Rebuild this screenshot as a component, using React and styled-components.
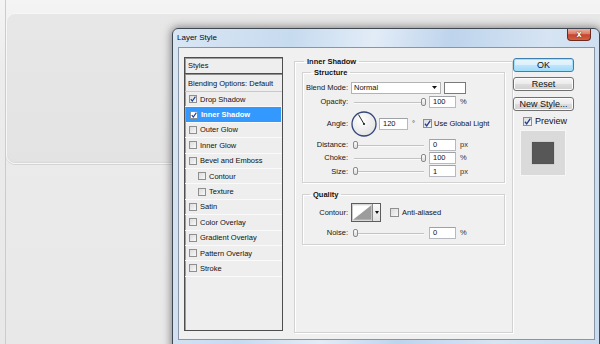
import React from 'react';
import styled, { createGlobalStyle } from 'styled-components';

const GlobalStyle = createGlobalStyle`
	html, body {
		margin: 0;
		padding: 0;
	}
	body {
		width: 600px;
		height: 344px;
		overflow: hidden;
		background: linear-gradient(#f4f4f4 0%, #ececec 20%, #e8e8e8 100%);
		font-family: "Liberation Sans", Arial, sans-serif;
		color: #111;
	}
`;

const Desktop = styled.div`
	position: relative;
	width: 600px;
	height: 344px;
	padding-left: 5px;
	box-sizing: border-box;
	overflow: hidden;
`;

const Guide = styled.div`
	height: 100%;
	border-left: 1px solid #8fe6ea;
	padding-top: 13px;
	box-sizing: border-box;
`;

const Card = styled.div`
	width: 640px;
	height: 151px;
	box-sizing: border-box;
	border: 1px solid #f7f7f7;
	border-radius: 9px;
	background: linear-gradient(#e7e7e7, #e3e3e3);
	box-shadow: 0 1px 0 #d4d4d4, inset 0 -1px 1px #d8d8d8;
`;

const Window = styled.div`
	position: absolute;
	left: 172px;
	top: 28px;
	width: 428px;
	height: 322px;
	box-sizing: border-box;
	border: 1px solid #3f4750;
	border-radius: 6px 6px 0 0;
	background: linear-gradient(100deg, #d9e6f4 0%, #c7dbef 25%, #e2ecf7 42%, #bed4ec 58%, #d6e4f3 78%, #c9dbee 100%);
	box-shadow: 0 0 9px 1px rgba(0, 0, 0, 0.45);
	display: flex;
	flex-direction: column;
`;

const TitleBar = styled.div`
	height: 18px;
	display: flex;
	justify-content: space-between;
	align-items: flex-start;
	flex: none;
`;

const Title = styled.span`
	font-size: 8px;
	line-height: 10px;
	padding: 4px 0 0 4px;
	color: #0b0b0b;
`;

const CloseButton = styled.div`
	width: 24px;
	height: 12px;
	margin-right: 8px;
	box-sizing: border-box;
	border: 1px solid #6b2a20;
	border-top: none;
	border-radius: 0 0 4px 4px;
	background: linear-gradient(#eeb1a3, #dc7a66 45%, #c7432d 52%, #d0623f);
	display: flex;
	align-items: center;
	justify-content: center;
	color: #fff;
	font: bold 8px "DejaVu Sans", sans-serif;
	text-shadow: 0 0 1px #5a1a10, 0 0 1px #5a1a10;
`;

const Client = styled.div`
	width: 417px;
	height: 293px;
	margin-left: 5px;
	box-sizing: border-box;
	border: 1px solid #8795a6;
	background: #f0f0f0;
	padding: 9px 0 0 5px;
	display: flex;
	align-items: flex-start;
	flex: none;
`;

const StylesPanel = styled.div`
	width: 99px;
	height: 274px;
	box-sizing: border-box;
	border: 1px solid #4e4e4e;
	box-shadow: inset 1px 1px 0 #9c9c9c;
	background: #eeeeee;
	margin-right: 11px;
	display: flex;
	flex-direction: column;
	flex: none;
	font-size: 7.5px;
	color: #111;
`;

const PanelHeader = styled.div`
	height: 16px;
	box-sizing: border-box;
	padding-left: 3px;
	display: flex;
	align-items: center;
	border-bottom: 1px solid #4e4e4e;
`;

const BlendHeader = styled.div`
	height: 18px;
	box-sizing: border-box;
	padding-left: 3px;
	display: flex;
	align-items: center;
	border-top: 1px solid #8e8e8e;
	border-bottom: 1px solid #c9c9c9;
`;

const StyleItem = styled.div`
	height: 15.4px;
	box-sizing: border-box;
	display: flex;
	align-items: center;
	gap: 3px;
	padding-left: ${p => (p.$sub ? 13 : 4)}px;
	border-bottom: 1px solid #fafafa;
	background: ${p => (p.$selected ? '#3399ff' : 'transparent')};
	color: ${p => (p.$selected ? '#fff' : '#111')};
	font-weight: ${p => (p.$selected ? 'bold' : 'normal')};
	margin-left: ${p => (p.$selected ? 1 : 0)}px;
	margin-right: ${p => (p.$selected ? 1 : 0)}px;
`;

const CheckBox = styled.span`
	width: ${p => p.$size}px;
	height: ${p => p.$size}px;
	box-sizing: border-box;
	border: 1px solid #8e8f8f;
	background: ${p => (p.$white ? '#fff' : 'linear-gradient(135deg, #dcdcdc, #f8f8f8)')};
	display: inline-flex;
	align-items: center;
	justify-content: center;
	flex: none;
`;

const Group = styled.fieldset`
	margin: ${p => p.$mt || 0}px 0 0 0;
	padding: 0 ${p => p.$pad}px;
	width: ${p => p.$w || '100%'};
	height: ${p => p.$h}px;
	box-sizing: border-box;
	min-width: 0;
	border: 1px solid #d2d2d2;
	box-shadow: inset 1px 1px 0 #ffffff, 1px 1px 0 #ffffff;
	flex: none;
`;

const Legend = styled.legend`
	font-weight: bold;
	font-size: 7.5px;
	line-height: 9px;
	padding: 0 3px;
	margin-left: ${p => p.$ml}px;
	color: #111;
`;

const Row = styled.div`
	display: flex;
	align-items: center;
	height: ${p => p.$h || 12}px;
	margin-top: ${p => p.$mt || 0}px;
	font-size: 7.5px;
`;

const Label = styled.span`
	width: 41px;
	margin-right: 3px;
	display: flex;
	justify-content: flex-end;
	white-space: nowrap;
	flex: none;
	color: #161616;
`;

const SliderTrack = styled.div`
	position: relative;
	width: 76px;
	height: 12px;
	margin-right: 2px;
	flex: none;
	&::before {
		content: '';
		position: absolute;
		left: 3px;
		right: 3px;
		top: 6px;
		height: 1px;
		background: #c3c3c3;
		box-shadow: 0 1px 0 #fafafa;
	}
`;

const Thumb = styled.span`
	position: absolute;
	top: 2px;
	${p => (p.$end ? 'right: 1px;' : 'left: 2px;')}
	width: 5px;
	height: 8px;
	box-sizing: border-box;
	border: 1px solid #8a8a8a;
	border-radius: 2px;
	background: linear-gradient(#fdfdfd, #dcdcdc);
`;

const Field = styled.span`
	width: ${p => p.$w || 27}px;
	height: 12px;
	box-sizing: border-box;
	border: 1px solid #b6b9bf;
	border-top-color: #9ea1a6;
	background: #fff;
	padding-left: 3px;
	display: flex;
	align-items: center;
	flex: none;
	margin-right: 4px;
`;

const Unit = styled.span`
	color: #333;
`;

const Select = styled.span`
	width: 90px;
	height: 12px;
	box-sizing: border-box;
	border: 1px solid #b3b3b3;
	background: #fff;
	padding: 0 3px 0 2px;
	display: flex;
	align-items: center;
	justify-content: space-between;
	margin-right: 3px;
	flex: none;
`;

const Swatch = styled.span`
	width: 22px;
	height: 12px;
	box-sizing: border-box;
	border: 1px solid #7a7a7a;
	background: #fff;
	flex: none;
`;

const Degree = styled.span`
	margin-right: 8px;
	color: #333;
`;

const CheckLabel = styled.span`
	margin-left: ${p => p.$gap || 2}px;
	font-size: ${p => p.$size || 7.5}px;
	color: #141414;
`;

const ContourPicker = styled.span`
	width: 30px;
	height: 19px;
	box-sizing: border-box;
	border: 1px solid #5d5d5d;
	display: flex;
	margin-right: 9px;
	flex: none;
	background: #fff;
`;

const ContourArrow = styled.span`
	width: 7px;
	border-left: 1px solid #8a8a8a;
	background: linear-gradient(#fafafa, #e2e2e2);
	display: flex;
	align-items: center;
	justify-content: center;
`;

const ButtonColumn = styled.div`
	width: 61px;
	padding-top: 1px;
	display: flex;
	flex-direction: column;
	align-items: center;
	flex: none;
`;

const Button = styled.div`
	width: 61px;
	height: 14px;
	margin-top: ${p => p.$mt || 0}px;
	box-sizing: border-box;
	border: 1px solid ${p => (p.$default ? '#3c7fb1' : '#707070')};
	border-radius: 3px;
	background: ${p =>
		p.$default
			? 'linear-gradient(#eaf6fd, #d9f0fc 50%, #bee6fd 50%, #a7d9f5)'
			: 'linear-gradient(#f6f6f6, #ebebeb 50%, #dddddd 50%, #cfcfcf)'};
	box-shadow: inset 0 0 0 1px ${p => (p.$default ? '#9fe0fb' : '#fcfcfc')};
	font-size: 9px;
	display: flex;
	align-items: center;
	justify-content: center;
	color: #111;
`;

const PreviewRow = styled.div`
	display: flex;
	align-items: center;
	height: 10px;
	margin-top: 5px;
	margin-left: 3px;
	align-self: flex-start;
	padding-left: 7px;
`;

const PreviewBox = styled.div`
	width: 46px;
	height: 46px;
	margin-top: 4px;
	margin-right: 2px;
	box-sizing: border-box;
	border: 1px solid #f6f6f6;
	background: #dadada;
	display: flex;
	align-items: center;
	justify-content: center;
`;

const PreviewSquare = styled.div`
	width: 22px;
	height: 22px;
	background: #575757;
	box-shadow: inset 0 0 1px #333, 0 0 1px #999;
`;

const Check = ({ checked, size = 8, white }) => (
	<CheckBox $size={size} $white={white}>
		{checked && (
			<svg width={size - 2} height={size - 2} viewBox="0 0 6 6">
				<path d="M0.8 3.2 L2.3 5 L5.4 0.6" fill="none" stroke="#1d3a94" strokeWidth="1.1" />
			</svg>
		)}
	</CheckBox>
);

const Slider = ({ end }) => (
	<SliderTrack>
		<Thumb $end={end} />
	</SliderTrack>
);

const Dial = () => (
	<svg width="26" height="26" viewBox="0 0 26 26" style={{ marginRight: 2, flex: 'none' }}>
		<defs>
			<radialGradient id="dialFill" cx="40%" cy="35%" r="70%">
				<stop offset="0" stopColor="#ffffff" />
				<stop offset="1" stopColor="#e2e2e2" />
			</radialGradient>
		</defs>
		<circle cx="13" cy="13" r="12" fill="url(#dialFill)" stroke="#34467a" strokeWidth="1.3" />
		<line x1="13" y1="13" x2="7.5" y2="3.6" stroke="#111" strokeWidth="0.9" />
		<circle cx="13" cy="13" r="1" fill="#111" />
	</svg>
);

const styleItems = [
	{ name: 'Drop Shadow', checked: true },
	{ name: 'Inner Shadow', checked: true, selected: true },
	{ name: 'Outer Glow' },
	{ name: 'Inner Glow' },
	{ name: 'Bevel and Emboss' },
	{ name: 'Contour', sub: true },
	{ name: 'Texture', sub: true },
	{ name: 'Satin' },
	{ name: 'Color Overlay' },
	{ name: 'Gradient Overlay' },
	{ name: 'Pattern Overlay' },
	{ name: 'Stroke' }
];

const App = () => (
	<Desktop>
		<GlobalStyle />
		<Guide>
			<Card />
		</Guide>
		<Window>
			<TitleBar>
				<Title>Layer Style</Title>
				<CloseButton>x</CloseButton>
			</TitleBar>
			<Client>
				<StylesPanel>
					<PanelHeader>Styles</PanelHeader>
					<BlendHeader>Blending Options: Default</BlendHeader>
					{styleItems.map(item => (
						<StyleItem key={item.name} $sub={item.sub} $selected={item.selected}>
							<Check checked={item.checked} white={item.selected} />
							{item.name}
						</StyleItem>
					))}
				</StylesPanel>

				<Group $w="219px" $h={276} $pad={7}>
					<Legend $ml={2}>Inner Shadow</Legend>
					<Group $mt={2} $h={115} $pad={4}>
						<Legend $ml={4}>Structure</Legend>
						<Row $mt={4.5}>
							<Label>Blend Mode:</Label>
							<Select>
								Normal
								<svg width="5" height="3" viewBox="0 0 5 3">
									<path d="M0 0 H5 L2.5 3 Z" fill="#111" />
								</svg>
							</Select>
							<Swatch />
						</Row>
						<Row $mt={2}>
							<Label>Opacity:</Label>
							<Slider end />
							<Field>100</Field>
							<Unit>%</Unit>
						</Row>
						<Row $mt={2} $h={28}>
							<Label>Angle:</Label>
							<Dial />
							<Field $w={29}>120</Field>
							<Degree>°</Degree>
							<Check checked size={9} />
							<CheckLabel>Use Global Light</CheckLabel>
						</Row>
						<Row $mt={1}>
							<Label>Distance:</Label>
							<Slider />
							<Field>0</Field>
							<Unit>px</Unit>
						</Row>
						<Row $mt={1}>
							<Label>Choke:</Label>
							<Slider end />
							<Field>100</Field>
							<Unit>%</Unit>
						</Row>
						<Row $mt={1.5}>
							<Label>Size:</Label>
							<Slider />
							<Field>1</Field>
							<Unit>px</Unit>
						</Row>
					</Group>
					<Group $mt={7} $h={55} $pad={4}>
						<Legend $ml={3}>Quality</Legend>
						<Row $mt={3.5} $h={19}>
							<Label>Contour:</Label>
							<ContourPicker>
								<svg width="21" height="17" viewBox="0 0 21 17" style={{ display: 'block' }}>
									<rect x="0.5" y="0.5" width="20" height="16" fill="#fff" stroke="#c8c8c8" />
									<path d="M1 16 L20 1 L20 16 Z" fill="#9c9c9c" />
								</svg>
								<ContourArrow>
									<svg width="4" height="3" viewBox="0 0 4 3">
										<path d="M0 0 H4 L2 3 Z" fill="#111" />
									</svg>
								</ContourArrow>
							</ContourPicker>
							<Check size={9} />
							<CheckLabel $gap={3}>Anti-aliased</CheckLabel>
						</Row>
						<Row $mt={5}>
							<Label>Noise:</Label>
							<Slider />
							<Field>0</Field>
							<Unit>%</Unit>
						</Row>
					</Group>
				</Group>

				<ButtonColumn>
					<Button $default>OK</Button>
					<Button $mt={5}>Reset</Button>
					<Button $mt={6}>New Style...</Button>
					<PreviewRow>
						<Check checked size={9} />
						<CheckLabel $size={9} $gap={3}>Preview</CheckLabel>
					</PreviewRow>
					<PreviewBox>
						<PreviewSquare />
					</PreviewBox>
				</ButtonColumn>
			</Client>
		</Window>
	</Desktop>
);

export default App;
